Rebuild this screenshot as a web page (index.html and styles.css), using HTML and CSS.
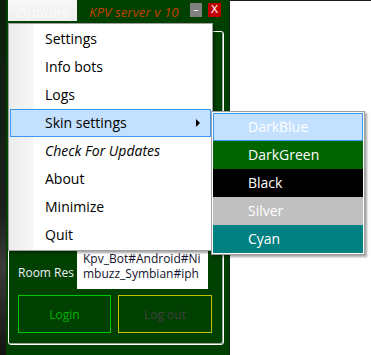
FILE: index.html
```html
<!DOCTYPE html>
<html lang="en">
<head>
<meta charset="UTF-8" />
<meta name="viewport" content="width=device-width, initial-scale=1" />
<title>KPV server v 10</title>
<link rel="stylesheet" href="styles.css">
</head>
<body>

<div id="screen">
  <div id="shade"></div>

  <div id="app">
    <div id="titlebar">
      <div id="optionsTab">Options</div>
      <div id="title">KPV server v 10</div>
      <div class="winBtn min">&ndash;</div>
      <div class="winBtn close">X</div>
    </div>

    <div id="panel">
      <div class="roomRow">
        <span class="roomLabel">Room Res</span>
        <div class="roomBox">Kpv_Bot#Android#Ni<br />mbuzz_Symbian#iph</div>
      </div>
      <div class="actions">
        <button class="login">Login</button>
        <button class="logout">Log out</button>
      </div>
    </div>

    <ul id="menu">
      <li>Settings</li>
      <li>Info bots</li>
      <li>Logs</li>
      <li class="hover hasSub">Skin settings</li>
      <li class="italic">Check For Updates</li>
      <li>About</li>
      <li>Minimize</li>
      <li>Quit</li>
    </ul>

    <ul id="skinMenu">
      <li class="hover">DarkBlue</li>
      <li class="darkgreen">DarkGreen</li>
      <li class="black">Black</li>
      <li class="silver">Silver</li>
      <li class="cyan">Cyan</li>
    </ul>
  </div>

  <div id="desk"></div>
</div>

</body>
</html>
```

FILE: styles.css
```css
body {
  margin: 0;
  padding: 0;
  background: #fff;
  overflow: hidden;
  font-family: "Open Sans", sans-serif;
}
#screen {
  display: flex;
  width: 371px;
  height: 355px;
}
#shade {
  width: 6px;
  background: linear-gradient(#0c1e0c, #1b1f1b 60%, #3a3a3a 75%, #141414);
}
#app {
  position: relative;
  display: flex;
  flex-direction: column;
  width: 221px;
  padding: 0 0 10px 2px;
  background: #004000;
}
#desk {
  flex: 1;
  background: #fff;
  border-top: 1px solid #1c1c1c;
  border-left: 1px solid #0b2a1c;
}

/* title bar */
#titlebar {
  display: flex;
  align-items: flex-start;
  height: 23px;
  flex-shrink: 0;
}
#optionsTab {
  width: 61px;
  height: 21px;
  padding-left: 8px;
  background: linear-gradient(#f8f8f8, #efefef);
  color: #fff;
  font-style: italic;
  font-size: 15px;
  line-height: 25px;
  text-shadow: 0 0 1px #e2e2e2;
  overflow: hidden;
  user-select: none;
}
#title {
  margin: 3px 0 0 12px;
  color: #c04000;
  font-style: italic;
  font-size: 13.4px;
  line-height: 18px;
}
.winBtn {
  width: 12px;
  height: 14px;
  margin-top: 3px;
  color: #fff;
  font-family: "DejaVu Sans", sans-serif;
  font-size: 11px;
  line-height: 14px;
  text-align: center;
}
.min {
  margin-left: auto;
  background: #808080;
}
.close {
  width: 13px;
  margin: 3px 8px 0 6px;
  background: #c00000;
}

/* group panel */
#panel {
  flex: 1;
  display: flex;
  flex-direction: column;
  justify-content: flex-end;
  width: 195px;
  margin-top: 8px;
  padding: 0 10px 11px 9px;
  border: 1px solid #fff;
  border-radius: 3px;
  box-shadow: inset -1px -1px 0 #9aa89a;
}
.roomRow {
  display: flex;
  align-items: center;
}
.roomLabel {
  padding-top: 7px;
  color: #eef0f8;
  font-size: 12px;
}
.roomBox {
  width: 131px;
  height: 41px;
  margin: 0 5px 0 auto;
  padding: 3px 0 0 6px;
  background: #fff;
  color: #12122c;
  font-size: 12px;
  line-height: 15px;
  white-space: nowrap;
  overflow: hidden;
  box-sizing: border-box;
}
.actions {
  display: flex;
  gap: 7px;
  margin-top: 6px;
}
.actions button {
  width: 93px;
  height: 38px;
  margin: 0;
  padding: 0;
  box-sizing: border-box;
  background: transparent;
  font-family: "Open Sans", sans-serif;
  font-size: 12px;
  cursor: pointer;
}
.login {
  border: 1px solid #00c800;
  color: #00b000;
}
.logout {
  width: 94px !important;
  border: 1px solid #c0c000;
  color: #404040;
}

/* context menus */
#menu, #skinMenu {
  position: absolute;
  margin: 0;
  list-style: none;
  font-size: 14px;
  box-shadow: 2px 2px 2px rgba(0, 0, 0, 0.35);
}
#menu {
  top: 23px;
  left: 2px;
  width: 203px;
  padding: 1px 0;
  border: 1px solid #a0a0a0;
  background: linear-gradient(90deg, #ececec, #f6f6f6 24px, #fff 25px);
}
#menu li {
  position: relative;
  height: 28px;
  margin: 0 1px;
  padding-left: 35px;
  color: #000;
  line-height: 28px;
  box-sizing: border-box;
}
#menu li.italic {
  font-style: italic;
}
#menu li.hover, #skinMenu li.hover {
  background: #c4e0ff;
  border: 1px solid #3a97f2;
  line-height: 26px;
  padding-left: 34px;
}
#menu li.hasSub::after {
  content: "";
  position: absolute;
  top: 9px;
  right: 10px;
  border-style: solid;
  border-width: 4px 0 4px 4px;
  border-color: transparent transparent transparent #000;
}
#skinMenu {
  top: 111px;
  left: 205px;
  width: 150px;
  padding: 1px;
  border: 1px solid #a0a0a0;
  background: #fff;
}
#skinMenu li {
  height: 28px;
  padding-left: 35px;
  color: #fff;
  line-height: 28px;
  box-sizing: border-box;
}
.darkgreen { background: #006400; }
.black { background: #000; }
.silver { background: #c0c0c0; }
.cyan { background: #008080; }
```
